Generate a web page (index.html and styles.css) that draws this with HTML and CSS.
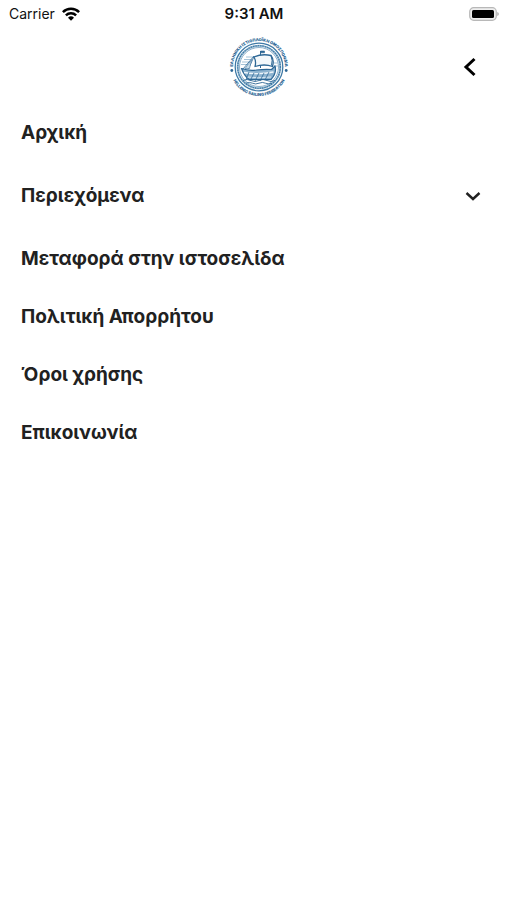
FILE: index.html
```html
<!DOCTYPE html>
<html lang="el">
<head>
<meta charset="utf-8">
<meta name="viewport" content="width=device-width, initial-scale=1">
<title>Μενού</title>
<link rel="stylesheet" href="styles.css">
</head>
<body>
<div class="status">
  <div class="carrier">
    <span>Carrier</span>
    <svg class="wifi" viewBox="0 0 18 14" aria-hidden="true">
      <g fill="none" stroke="#000" stroke-width="2.5">
        <path d="M.9 5.2a11.5 11.5 0 0 1 16.2 0"/>
        <path d="M3.9 8.3a7.3 7.3 0 0 1 10.2 0"/>
      </g>
      <path d="M9 13.8 6 10.8a4.3 4.3 0 0 1 6 0Z"/>
    </svg>
  </div>
  <time class="clock">9:31 AM</time>
  <svg class="battery" viewBox="0 0 30 14" aria-hidden="true">
    <rect x=".7" y=".7" width="26.6" height="12.6" rx="4" fill="#eee" stroke="#b8b8b8" stroke-width="1.2"/>
    <rect x="3" y="3" width="22" height="8" rx="1.5"/>
    <path d="M28.3 5v4q1.5-.6 1.5-2t-1.5-2Z" fill="#aaa"/>
  </svg>
</div>

<header class="header">
  <svg class="logo" viewBox="0 0 60 60" role="img" aria-label="Hellenic Sailing Federation">
    <defs>
      <path id="arc-top" d="M4 30a26 26 0 0 1 52 0"/>
      <path id="arc-bottom" d="M1 30a29 29 0 0 0 58 0"/>
    </defs>
    <g class="logo-text">
      <text><textPath href="#arc-top" startOffset="50%">ΕΛΛΗΝΙΚΗ ΙΣΤΙΟΠΛΟΪΚΗ ΟΜΟΣΠΟΝΔΙΑ</textPath></text>
      <text><textPath href="#arc-bottom" startOffset="50%">HELLENIC SAILING FEDERATION</textPath></text>
    </g>
    <g fill="#2d6795">
      <circle cx="2.8" cy="33.500" r="1.4"/>
      <circle cx="57.2" cy="33.500" r="1.4"/>
    </g>
    <g fill="none" stroke="#3f7aa6">
      <circle cx="30" cy="30" r="23.8" stroke-width="1.3"/>
      <circle cx="30" cy="30" r="21.3" stroke="#8fb4ce" stroke-width="2"/>
      <circle cx="30" cy="30" r="21.3" stroke-width="1.2" stroke-dasharray="1.4 1"/>
      <circle cx="30" cy="30" r="19.500" stroke-width=".6"/>
    </g>
    <g fill="none" stroke="#8fb4ce" stroke-width=".8">
      <path d="M17 20h9M15 22.500h8M13 25h8M12 27.500h7M45 26h4M45 29h4"/>
    </g>
    <g fill="none" stroke="#2d6795" stroke-linejoin="round">
      <path d="M31.500 31V14" stroke-width="1"/>
      <path d="M31.500 14h4v1.800h-4z" fill="#2d6795" stroke-width=".6"/>
      <path d="M25 20q8-3.500 17-1.500 3.500 4.500 1.500 11-8-3-17.500 0 1.500-5-1-9.500Z" fill="#f3f8fb" stroke-width="1.300"/>
      <path d="M42 18.500q2 5 .5 10" stroke-width="1"/>
      <path d="M25 19 14 32M25 19.500 19.500 32" stroke-width=".8"/>
      <path d="M22.500 23 16 31.500h4.500Z" fill="#c5dae8" stroke-width=".5"/>
      <path d="M12.500 31.500q7 2.500 15 1.500t15-.5l3.500-3.500q2 7-4 13.500H20q-5-4-7.500-11Z" fill="#8db3cf" stroke-width="1.200"/>
      <path d="M15 35.500q14 2.500 29.500-.5" stroke="#eef5fa" stroke-width="1.300"/>
      <path d="M18 40q11 1.500 24 0" stroke="#e4eff6" stroke-width=".9"/>
      <path d="M20 35l-3 8M25 36l-4 8M30 36l-4 8M35 36l-4 8M40 35l-4 8" stroke-width=".8"/>
      <path d="M14 43.500q4-2 8 0t8 0 8 0 8 0M17 46.200q3.500-1.500 6.500 0t6.500 0 6.500 0 6.500 0" stroke-width=".9"/>
    </g>
  </svg>
  <button class="back" type="button" aria-label="Πίσω">
    <svg class="icon" viewBox="0 0 26 26" aria-hidden="true"><path d="M17.500 5 9 13l8.500 8" stroke-width="3"/></svg>
  </button>
</header>

<nav>
  <ul class="menu">
    <li><a class="item" href="#">Αρχική</a></li>
    <li>
      <button class="item item-group" type="button" aria-expanded="false">
        <span>Περιεχόμενα</span>
        <svg class="icon" viewBox="0 0 26 26" aria-hidden="true"><path d="m6.500 10 6.500 6 6.500-6" stroke-width="2.400"/></svg>
      </button>
    </li>
    <li><a class="item" href="#">Μεταφορά στην ιστοσελίδα</a></li>
    <li><a class="item" href="#">Πολιτική Απορρήτου</a></li>
    <li><a class="item" href="#">Όροι χρήσης</a></li>
    <li><a class="item" href="#">Επικοινωνία</a></li>
  </ul>
</nav>
</body>
</html>
```
FILE: styles.css
```css
* {
  box-sizing: border-box;
}

body {
  margin: 0;
  background: #fff;
  color: #212121;
  font-family: Inter, "Liberation Sans", sans-serif;
}

button {
  border: 0;
  padding: 0;
  background: none;
  color: inherit;
  font: inherit;
  cursor: pointer;
}

.status {
  display: grid;
  grid-template-columns: 1fr auto 1fr;
  align-items: center;
  height: 27px;
  padding: 0 8px 0 9px;
  color: #111;
  font-size: 14px;
  line-height: 21px;
}

.carrier {
  display: flex;
  align-items: center;
  gap: 7px;
}

.wifi {
  width: 18px;
  height: 14px;
}

.clock {
  font-size: 15px;
  font-weight: 600;
}

.battery {
  justify-self: end;
  width: 30px;
  height: 14px;
}

.header {
  display: grid;
  grid-template-columns: 1fr auto 1fr;
  align-items: center;
  padding: 10px 10px 7px 21px;
}

.logo {
  grid-column: 2;
  width: 60px;
  height: 60px;
}

.logo-text {
  fill: #2d6795;
  font-size: 4px;
  font-weight: 900;
  text-anchor: middle;
}

.back {
  display: grid;
  place-items: center;
  justify-self: end;
  width: 54px;
  height: 44px;
  color: #000;
}

.icon {
  width: 26px;
  height: 26px;
  fill: none;
  stroke: currentColor;
}

.menu {
  margin: 0;
  padding: 0;
  list-style: none;
}

.item {
  display: flex;
  align-items: center;
  justify-content: space-between;
  width: 100%;
  min-height: 58px;
  padding: 0 21px;
  color: inherit;
  font-size: 19px;
  font-weight: 700;
  line-height: 24px;
  text-decoration: none;
}

.item-group {
  min-height: 68px;
}
```
